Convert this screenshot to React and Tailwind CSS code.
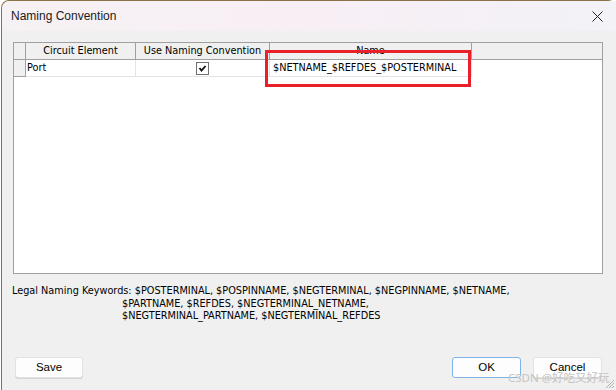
import React from 'react';

const tahoma = { fontFamily: '"DejaVu Sans Condensed", "DejaVu Sans", sans-serif', fontStretch: 'condensed' };
const segoe = { fontFamily: '"Liberation Sans", Arial, sans-serif' };

function Grip() {
  return (
    <svg width="12" height="12" viewBox="0 0 12 12" className="absolute right-[1px] bottom-[1px]">
      <path d="M11 3 L3 11 M11 6 L6 11 M11 9 L9 11" stroke="#b0b0b0" strokeWidth="1" />
    </svg>
  );
}

export default function App() {
  return (
    <div className="w-[616px] h-[390px] bg-white overflow-hidden">
      <div className="relative w-[615px] h-[390px] ml-[1px] rounded-t-[8px] border-l border-t border-[#8b7147] bg-[#f0f0f0] flex flex-col">
        {/* barra de título */}
        <div className="h-[30px] shrink-0 rounded-tl-[8px] bg-gradient-to-r from-[#f6f1f3] via-[#f8eff5] to-[#f2f2f7] flex items-center justify-between pl-[9px] pr-[13px]">
          <span className="text-[12px] text-[#1a1a1a]" style={segoe}>Naming Convention</span>
          <svg width="11" height="11" viewBox="0 0 11 11"><path d="M0.5 0.5 L10.5 10.5 M10.5 0.5 L0.5 10.5" stroke="#222" strokeWidth="1" /></svg>
        </div>

        <div className="flex-1 flex flex-col pl-[11px] pr-[14px] pt-[11px]">
          {/* tabla */}
          <div className="relative w-[590px] h-[232px] bg-white border border-[#a0a0a0] text-[10.8px] text-black" style={tahoma}>
            <div className="flex h-[17px] bg-[#f0f0f0] border-b border-[#a0a0a0]">
              <div className="w-[12px] border-r border-[#a0a0a0]" />
              <div className="w-[110px] border-r border-[#a0a0a0] flex items-center justify-center whitespace-nowrap">Circuit Element</div>
              <div className="w-[134px] border-r border-[#a0a0a0] flex items-center justify-center whitespace-nowrap">Use Naming Convention</div>
              <div className="w-[202px] border-r border-[#a0a0a0] flex items-center justify-center">Name</div>
              <div className="flex-1" />
            </div>
            <div className="flex h-[17px]">
              <div className="w-[12px] bg-[#f0f0f0] border-r border-b border-[#a0a0a0]" />
              <div className="w-[110px] border-r border-b border-[#e3e3e3] flex items-center pl-[1px]">Port</div>
              <div className="w-[134px] border-r border-b border-[#e3e3e3] flex items-center justify-center">
                <div className="w-[13px] h-[13px] border border-[#707070] bg-white flex items-center justify-center">
                  <svg width="9" height="9" viewBox="0 0 9 9"><path d="M1.5 4 L3.5 6.5 L7.5 2" stroke="#111" strokeWidth="1.8" fill="none" /></svg>
                </div>
              </div>
              <div className="w-[202px] border-r border-b border-[#e3e3e3] flex items-center pl-[3px] whitespace-nowrap">$NETNAME_$REFDES_$POSTERMINAL</div>
            </div>
            {/* recuadro rojo */}
            <div className="absolute left-[251px] top-[7px] w-[206px] h-[37px] border-[3px] border-[#e8202a]" />
          </div>

          {/* palabras clave */}
          <div className="mt-[11px] -ml-[1px] text-[10.8px] leading-[12.5px] text-black whitespace-nowrap" style={tahoma}>
            <div>Legal Naming Keywords: $POSTERMINAL, $POSPINNAME, $NEGTERMINAL, $NEGPINNAME, $NETNAME,</div>
            <div className="pl-[110px]">$PARTNAME, $REFDES, $NEGTERMINAL_NETNAME,</div>
            <div className="pl-[110px]">$NEGTERMINAL_PARTNAME, $NEGTERMINAL_REFDES</div>
          </div>

          {/* botones */}
          <div className="mt-auto mb-[12px] flex items-center text-[11.5px] text-black" style={segoe}>
            <button className="w-[68px] h-[21px] rounded-[3px] bg-[#fdfdfd] border border-[#e2e2e2] shadow-[0_1px_0_#d4d4d4] ml-[2px]">Save</button>
            <div className="flex-1" />
            <button className="w-[69px] h-[21px] rounded-[3px] bg-[#fdfdfd] border border-[#7fb4e6] mr-[12px]">OK</button>
            <button className="w-[69px] h-[21px] rounded-[3px] bg-[#fdfdfd] border border-[#e2e2e2] shadow-[0_1px_0_#d4d4d4]">Cancel</button>
          </div>
        </div>

        <span className="absolute left-[506px] bottom-[4px] text-[11.5px] text-[#c4c4c4]" style={{ fontFamily: '"Noto Sans", "Noto Sans CJK SC", sans-serif' }}>CSDN @好吃又好玩</span>
        <Grip />
      </div>
    </div>
  );
}
